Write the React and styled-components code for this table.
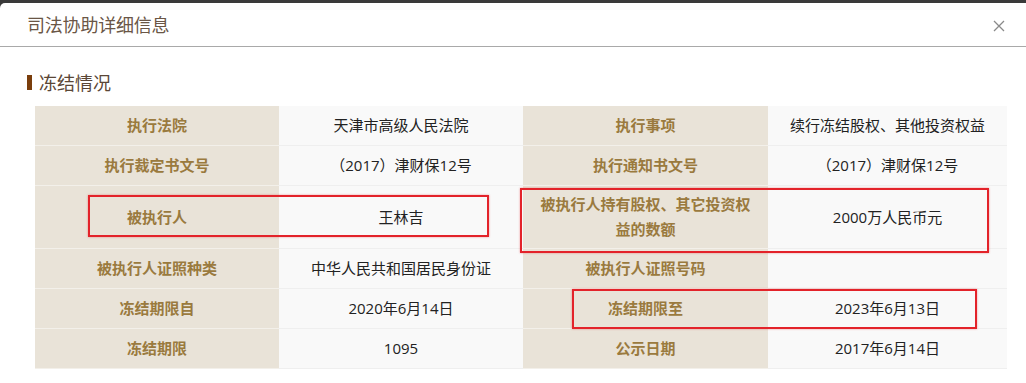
import React from "react";
import styled, { createGlobalStyle } from "styled-components";

const Global = createGlobalStyle`
  html, body { margin: 0; padding: 0; background: #3a3a3a; }
  body { font-family: "Open Sans", "Noto Sans CJK SC", "Noto Sans", sans-serif; }
  * { box-sizing: border-box; }
`;

const Frame = styled.div`
  width: 1026px;
  height: 383px;
  padding-top: 3px;
  background: #3a3a3a;
  overflow: hidden;
`;

const Modal = styled.div`
  height: 380px;
  background: #ffffff;
  border-top-left-radius: 5px;
`;

const Header = styled.div`
  height: 44px;
  display: flex;
  align-items: center;
  justify-content: space-between;
  padding: 0 19px 1px 27px;
  border-bottom: 1px solid #a9a9a9;
`;

const Title = styled.div`
  font-size: 18px;
  color: #6a5646;
  letter-spacing: -0.2px;
`;

const Close = styled.button`
  width: 14px;
  height: 14px;
  padding: 0;
  margin-right: 1px;
  margin-top: 3px;
  border: none;
  background: none;
  display: flex;
  align-items: center;
  justify-content: center;
  cursor: pointer;
`;

const Body = styled.div`
  padding: 23px 19px 0 27px;
`;

const SectionTitle = styled.div`
  display: flex;
  align-items: center;
  gap: 7px;
  height: 24px;
  font-size: 18px;
  color: #5a4636;
`;

const Bar = styled.span`
  width: 5px;
  height: 15px;
  background: #7a3e0c;
`;

const TableWrap = styled.div`
  position: relative;
  margin: 12px 0 0 8px;
  width: 972px;
`;

const Grid = styled.div`
  display: grid;
  grid-template-columns: 244px 244px 245px 239px;
  border-right: 1px solid #ececec;
`;

const Cell = styled.div`
  min-height: 40px;
  padding: 6px 12px;
  display: flex;
  align-items: center;
  justify-content: center;
  text-align: center;
  font-size: 15px;
  line-height: 25px;
  border-bottom: 1px solid ${(p) => (p.$label ? "#f3f0ea" : "#efefef")};
  background: ${(p) => (p.$label ? "#e9e3d8" : "#f9f9f9")};
  color: ${(p) => (p.$label ? "#9a7a3e" : "#222222")};
  font-weight: ${(p) => (p.$label ? 700 : 400)};
`;

const Mark = styled.div`
  position: absolute;
  border: 2px solid #e3232a;
  box-shadow: 0 0 2px rgba(227, 35, 42, 0.45);
  pointer-events: none;
`;

const rows = [
  ["执行法院", "天津市高级人民法院", "执行事项", "续行冻结股权、其他投资权益"],
  ["执行裁定书文号", "（2017）津财保12号", "执行通知书文号", "（2017）津财保12号"],
  ["被执行人", "王林吉", "被执行人持有股权、其它投资权益的数额", "2000万人民币元"],
  ["被执行人证照种类", "中华人民共和国居民身份证", "被执行人证照号码", ""],
  ["冻结期限自", "2020年6月14日", "冻结期限至", "2023年6月13日"],
  ["冻结期限", "1095", "公示日期", "2017年6月14日"],
];

const marks = [
  { left: 53, top: 89, width: 401, height: 42 },
  { left: 485, top: 82, width: 469, height: 65 },
  { left: 537, top: 183, width: 405, height: 40 },
];

export default function App() {
  return (
    <>
      <Global />
      <Frame>
        <Modal>
          <Header>
            <Title>司法协助详细信息</Title>
            <Close aria-label="关闭">
              <svg width="12" height="12" viewBox="0 0 12 12">
                <path d="M1 1L11 11M11 1L1 11" stroke="#8a8a8a" strokeWidth="1.3" fill="none" />
              </svg>
            </Close>
          </Header>
          <Body>
            <SectionTitle>
              <Bar />
              冻结情况
            </SectionTitle>
            <TableWrap>
              <Grid>
                {rows.map((r, i) => (
                  <React.Fragment key={i}>
                    <Cell $label>{r[0]}</Cell>
                    <Cell>{r[1]}</Cell>
                    <Cell $label>{r[2]}</Cell>
                    <Cell>{r[3]}</Cell>
                  </React.Fragment>
                ))}
              </Grid>
              {marks.map((m, i) => (
                <Mark key={i} style={m} />
              ))}
            </TableWrap>
          </Body>
        </Modal>
      </Frame>
    </>
  );
}
